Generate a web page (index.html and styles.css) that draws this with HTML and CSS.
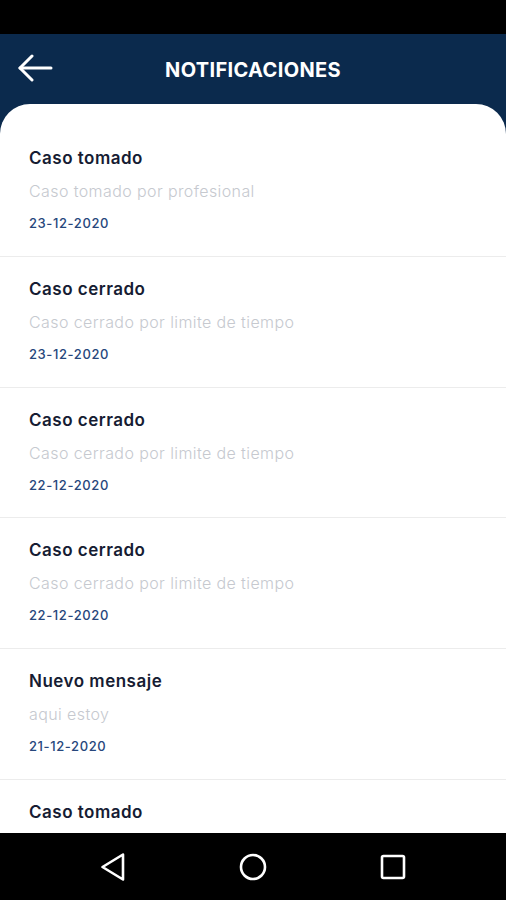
FILE: index.html
```
<!DOCTYPE html>
<html lang="es">
<head>
<meta charset="utf-8">
<title>Notificaciones</title>
<link rel="stylesheet" href="styles.css">
</head>
<body>
<div class="screen">
  <div class="status-bar"></div>
  <div class="app">
    <header class="header">
      <button class="back" aria-label="Volver">
        <svg width="36" height="28" viewBox="0 0 36 28" fill="none" stroke="#ffffff" stroke-width="3" stroke-linecap="round" stroke-linejoin="round">
          <path d="M34 14H3"/>
          <path d="M15 2L3 14l12 12"/>
        </svg>
      </button>
      <h1 class="title">NOTIFICACIONES</h1>
    </header>
    <main class="card">
      <ul class="list">
        <li class="item">
          <div class="item-title">Caso tomado</div>
          <div class="item-desc">Caso tomado por profesional</div>
          <div class="item-date">23-12-2020</div>
        </li>
        <li class="item">
          <div class="item-title">Caso cerrado</div>
          <div class="item-desc">Caso cerrado por limite de tiempo</div>
          <div class="item-date">23-12-2020</div>
        </li>
        <li class="item">
          <div class="item-title">Caso cerrado</div>
          <div class="item-desc">Caso cerrado por limite de tiempo</div>
          <div class="item-date">22-12-2020</div>
        </li>
        <li class="item">
          <div class="item-title">Caso cerrado</div>
          <div class="item-desc">Caso cerrado por limite de tiempo</div>
          <div class="item-date">22-12-2020</div>
        </li>
        <li class="item">
          <div class="item-title">Nuevo mensaje</div>
          <div class="item-desc">aqui estoy</div>
          <div class="item-date">21-12-2020</div>
        </li>
        <li class="item">
          <div class="item-title">Caso tomado</div>
          <div class="item-desc">Caso tomado por profesional</div>
          <div class="item-date">21-12-2020</div>
        </li>
      </ul>
    </main>
  </div>
  <nav class="nav-bar">
    <span class="nav-slot">
      <svg width="28" height="30" viewBox="0 0 28 30" fill="none" stroke="#ffffff" stroke-width="2.6" stroke-linejoin="round">
        <path d="M24 2.5L3.5 15L24 27.5Z"/>
      </svg>
    </span>
    <span class="nav-slot">
      <svg width="30" height="30" viewBox="0 0 30 30" fill="none" stroke="#ffffff" stroke-width="2.6">
        <circle cx="15" cy="15" r="12"/>
      </svg>
    </span>
    <span class="nav-slot">
      <svg width="28" height="28" viewBox="0 0 28 28" fill="none" stroke="#ffffff" stroke-width="2.6" stroke-linejoin="round">
        <rect x="3" y="3" width="22" height="22" rx="1.5"/>
      </svg>
    </span>
  </nav>
</div>
</body>
</html>
```

FILE: styles.css
```
* {
  box-sizing: border-box;
}

html, body {
  margin: 0;
  padding: 0;
  background: #000000;
}

body {
  font-family: "Inter", "Noto Sans", sans-serif;
}

.screen {
  width: 506px;
  height: 900px;
  display: flex;
  flex-direction: column;
  overflow: hidden;
}

.status-bar {
  height: 34px;
  background: #000000;
  flex: none;
}

.app {
  flex: 1;
  display: flex;
  flex-direction: column;
  background: #0b2a4d;
  min-height: 0;
}

.header {
  height: 70px;
  flex: none;
  display: flex;
  align-items: center;
  justify-content: center;
  position: relative;
}

.back {
  position: absolute;
  left: 17px;
  top: 20px;
  padding: 0;
  margin: 0;
  border: 0;
  background: none;
  display: flex;
}

.title {
  margin: 0;
  color: #ffffff;
  font-size: 20px;
  font-weight: 700;
  letter-spacing: 0.35px;
  line-height: 1;
  padding-top: 1px;
}

.card {
  flex: 1;
  background: #ffffff;
  border-radius: 30px 30px 0 0;
  overflow: hidden;
  padding-top: 22px;
  min-height: 0;
}

.list {
  list-style: none;
  margin: 0;
  padding: 0;
}

.item {
  padding: 22px 20px 23.8px 29px;
  border-bottom: 1px solid #ececec;
}

.item-title {
  font-size: 17px;
  font-weight: 600;
  color: #161c33;
  line-height: 20px;
  letter-spacing: 0.5px;
}

.item-desc {
  margin-top: 13px;
  font-size: 16px;
  font-weight: 300;
  color: #c6c9cf;
  line-height: 20px;
  letter-spacing: 0.4px;
}

.item-date {
  margin-top: 13px;
  font-size: 13px;
  font-weight: 500;
  color: #27477c;
  line-height: 18px;
  letter-spacing: 0.6px;
}

.nav-bar {
  height: 67px;
  flex: none;
  background: #000000;
  display: flex;
  align-items: center;
  justify-content: center;
  gap: 80px;
}

.nav-slot {
  width: 60px;
  display: flex;
  justify-content: center;
  align-items: center;
}
```
